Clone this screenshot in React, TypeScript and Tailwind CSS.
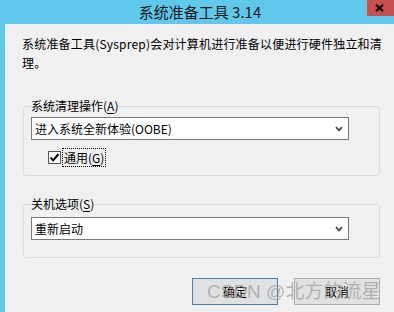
const ui = { fontFamily: '"Noto Sans CJK SC", "Noto Sans", sans-serif' }

function Chevron() {
  return (
    <svg width="8" height="6" viewBox="0 0 8 6" className="shrink-0">
      <path d="M1 1.2 L4 4.4 L7 1.2" fill="none" stroke="#4d4d4d" strokeWidth="1.8" />
    </svg>
  )
}

function Select({ value }: { value: string }) {
  return (
    <div className="flex items-center justify-between w-[318px] h-[23px] bg-white border border-[#7a7a7a] pl-[3px] pr-[5px] text-[12px] leading-[16px] text-black">
      <span>{value}</span>
      <Chevron />
    </div>
  )
}

function Legend({ text, hot }: { text: string; hot: string }) {
  return (
    <legend className="text-[12px] leading-[16px] text-black">
      {text}(<span className="underline underline-offset-[2px]">{hot}</span>)
    </legend>
  )
}

export default function App() {
  return (
    <div className="relative w-[394px] h-[312px] overflow-hidden bg-[#60c8ea] flex flex-col" style={ui}>
      {/* title bar */}
      <div className="h-[24px] shrink-0 flex items-center justify-center pl-[6px]">
        <span className="text-[15px] leading-[20px] text-[#1a1a1a]">系统准备工具 3.14</span>
      </div>
      <div className="absolute top-0 right-0 w-[27px] h-[16px] bg-[#c75050] flex items-center justify-center pr-[6px] pl-[4px]">
        <svg width="9" height="8" viewBox="0 0 9 8">
          <path d="M1 0.8 L8 7.2 M8 0.8 L1 7.2" stroke="#000" strokeWidth="2.2" />
        </svg>
      </div>

      {/* client area */}
      <div className="flex-1 ml-[5px] bg-[#f0f0f0] pl-[17px] pt-[10px] flex flex-col">
        <p className="text-[12px] leading-[19px] tracking-[0.2px] text-black whitespace-nowrap">
          系统准备工具(Sysprep)会对计算机进行准备以便进行硬件独立和清
          <br />
          理。
        </p>

        <fieldset className="mt-[26px] ml-[1px] w-[357px] border border-[#dcdcdc] rounded-[3px] pl-[7px] pb-[8px]">
          <Legend text="系统清理操作" hot="A" />
          <div className="mt-[3px]">
            <Select value="进入系统全新体验(OOBE)" />
          </div>
          <div className="mt-[8px] ml-[17px] flex items-center h-[19px] gap-[1px]">
            <div className="w-[13px] h-[13px] bg-white border border-[#555] flex items-center justify-center">
              <svg width="11" height="11" viewBox="0 0 11 11">
                <path d="M1.5 5.5 L4.2 8.3 L9.5 2" fill="none" stroke="#000" strokeWidth="2" />
              </svg>
            </div>
            <span className="border border-dotted border-black px-[1px] h-[19px] text-[12px] leading-[17px] text-black">
              通用(<span className="underline underline-offset-[2px]">G</span>)
            </span>
          </div>
        </fieldset>

        <fieldset className="mt-[20px] ml-[1px] w-[357px] border border-[#dcdcdc] rounded-[3px] pl-[7px] pb-[17px]">
          <Legend text="关机选项" hot="S" />
          <div className="mt-[5px]">
            <Select value="重新启动" />
          </div>
        </fieldset>

        <div className="mt-[20px] ml-[1px] w-[357px] flex justify-end gap-[16px]">
          <button className="w-[86px] h-[27px] bg-[#e1e1e1] border border-[#4a80b0] text-[12px] leading-[16px] text-black">
            确定
          </button>
          <button className="w-[86px] h-[27px] bg-[#e1e1e1] border border-[#adadad] text-[12px] leading-[16px] text-black">
            取消
          </button>
        </div>
      </div>

      {/* watermark */}
      <div
        className="absolute left-[207px] top-[281px] text-[19px] leading-[22px] text-[#9a9a9a]/70 whitespace-nowrap pointer-events-none"
        style={{ fontFamily: '"Liberation Sans", "Noto Sans CJK SC", sans-serif' }}
      >
        CSDN @北方的流星
      </div>
    </div>
  )
}
